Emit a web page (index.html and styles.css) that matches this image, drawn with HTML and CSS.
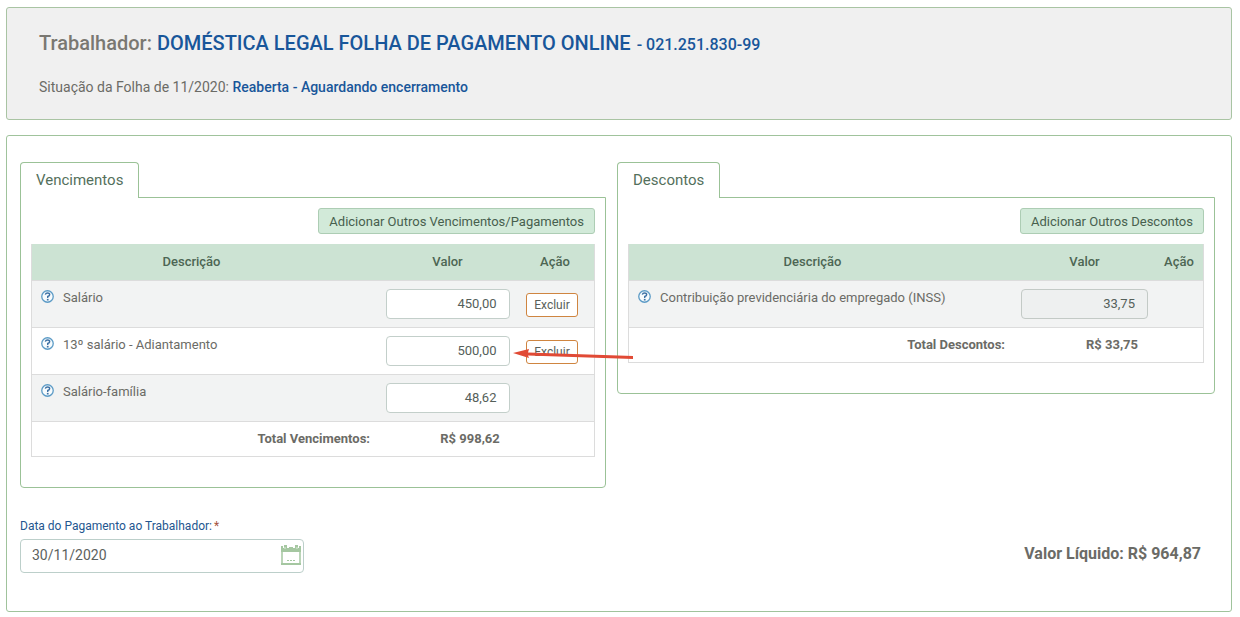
FILE: index.html
```
<!DOCTYPE html>
<html lang="pt-BR">
  <head>
    <meta charset="UTF-8" />
    <meta name="viewport" content="width=device-width, initial-scale=1.0" />
    <title>Folha de Pagamento</title>
    <link rel="stylesheet" href="styles.css">
  </head>
  <body>
    <svg class="symbols" aria-hidden="true">
      <symbol id="help" viewBox="0 0 12 12">
        <circle cx="6" cy="6" r="5.3" fill="#f7fbfd" stroke="#5c9bc6" stroke-width="1.2" />
        <path d="M4 4.2Q4.3 2.8 6 2.8Q8 2.8 8 4.3Q8 5.3 6.2 6V7.4" fill="none" stroke="#3f72a5" stroke-width="1.3" />
        <rect x="5.4" y="8.2" width="1.6" height="1.5" fill="#3f72a5" />
      </symbol>
    </svg>

    <header class="worker">
      <h1>Trabalhador: <strong>DOMÉSTICA LEGAL FOLHA DE PAGAMENTO ONLINE <small>- 021.251.830-99</small></strong></h1>
      <p>Situação da Folha de 11/2020: <strong>Reaberta - Aguardando encerramento</strong></p>
    </header>

    <main class="payroll">
      <div class="columns">
        <section class="group">
          <h2 class="tab">Vencimentos</h2>
          <div class="group-body">
            <button type="button" class="add-button">Adicionar Outros Vencimentos/Pagamentos</button>
            <table class="earnings">
              <thead>
                <tr>
                  <th class="col-desc">Descrição</th>
                  <th class="col-value">Valor</th>
                  <th class="col-action">Ação</th>
                </tr>
              </thead>
              <tbody>
                <tr>
                  <td><label class="desc" for="salario"><svg class="help"><use href="#help" /></svg>Salário</label></td>
                  <td><input type="text" class="value" id="salario" value="450,00" /></td>
                  <td><button type="button" class="delete-button">Excluir</button></td>
                </tr>
                <tr>
                  <td><label class="desc" for="decimo"><svg class="help"><use href="#help" /></svg>13º salário - Adiantamento</label></td>
                  <td>
                    <div class="pointed">
                      <input type="text" class="value" id="decimo" value="500,00" />
                      <svg class="arrow" viewBox="0 0 120 14" aria-hidden="true">
                        <path d="M0 6L16 2L15 5.5L120 9V12L15 8.5L16 11Z" fill="#e14a35" />
                      </svg>
                    </div>
                  </td>
                  <td><button type="button" class="delete-button">Excluir</button></td>
                </tr>
                <tr>
                  <td><label class="desc" for="familia"><svg class="help"><use href="#help" /></svg>Salário-família</label></td>
                  <td><input type="text" class="value" id="familia" value="48,62" /></td>
                  <td></td>
                </tr>
              </tbody>
              <tfoot>
                <tr>
                  <td class="total-label">Total Vencimentos:</td>
                  <td class="total">R$ 998,62</td>
                  <td></td>
                </tr>
              </tfoot>
            </table>
          </div>
        </section>

        <section class="group">
          <h2 class="tab">Descontos</h2>
          <div class="group-body">
            <button type="button" class="add-button">Adicionar Outros Descontos</button>
            <table class="discounts">
              <thead>
                <tr>
                  <th class="col-desc">Descrição</th>
                  <th class="col-value">Valor</th>
                  <th class="col-action">Ação</th>
                </tr>
              </thead>
              <tbody>
                <tr>
                  <td><label class="desc" for="inss"><svg class="help"><use href="#help" /></svg>Contribuição previdenciária do empregado (INSS)</label></td>
                  <td><input type="text" class="value" id="inss" value="33,75" readonly /></td>
                  <td></td>
                </tr>
              </tbody>
              <tfoot>
                <tr>
                  <td class="total-label">Total Descontos:</td>
                  <td class="total">R$ 33,75</td>
                  <td></td>
                </tr>
              </tfoot>
            </table>
          </div>
        </section>
      </div>

      <div class="bottom">
        <div class="payment-date">
          <label for="data">Data do Pagamento ao Trabalhador:<span class="required">*</span></label>
          <div class="date-box">
            <input type="text" id="data" value="30/11/2020" />
            <svg class="calendar" viewBox="0 0 20 20" aria-hidden="true">
              <path d="M1 4V19H19V4" fill="#fff" stroke="#a5c7a1" stroke-width="1.5" />
              <path d="M0 1H2V3H3V0H6V3H8V2H12V3H14V0H17V3H18V1H20V7H0ZM0 18H20V20H0Z" fill="#a5c7a1" />
              <path d="M4 2V4M16 2V4" stroke="#dcebd9" />
              <path d="M6 15.5H14" stroke="#a5c7a1" stroke-dasharray="2 1" />
            </svg>
          </div>
        </div>
        <p class="net">Valor Líquido: R$ 964,87</p>
      </div>
    </main>
  </body>
</html>
```
FILE: styles.css
```
* {
  box-sizing: border-box;
}

body {
  font-family: Roboto, Arial, sans-serif;
  font-size: 13px;
  margin: 7px 8px 5px 6px;
  color: #6b6b66;
  background-color: #fff;
}

input,
button {
  font-family: inherit;
  font-size: 13px;
}

.symbols {
  display: none;
}

.worker {
  background-color: #f0f0f0;
  border: 1px solid #a9c4a3;
  border-radius: 3px;
  padding: 23px 32px 22px;
  margin-bottom: 15px;
}

.worker h1 {
  margin: 0 0 21px;
  font-size: 20px;
  line-height: 24px;
  font-weight: 500;
  color: #7a7872;
}

.worker p {
  margin: 0;
  font-size: 14px;
  line-height: 19px;
}

.worker strong {
  font-weight: 500;
  color: #18569a;
}

.worker small {
  margin-left: 1px;
  font-size: 16px;
}

.payroll {
  border: 1px solid #a0c39c;
  border-radius: 3px;
  padding: 26px 16px 38px 13px;
}

.columns {
  display: grid;
  grid-template-columns: 586fr 598fr;
  gap: 11px;
  align-items: start;
}

.tab {
  position: relative;
  width: fit-content;
  margin: 0 0 -1px;
  padding: 0 15px;
  border: 1px solid #9bc297;
  border-bottom: none;
  border-radius: 4px 4px 0 0;
  background-color: #fff;
  color: #54705c;
  font-size: 15px;
  line-height: 35px;
  font-weight: 400;
}

.group-body {
  border: 1px solid #9bc297;
  border-radius: 0 0 4px 4px;
  padding: 10px 10px 30px;
}

.add-button {
  display: block;
  height: 26px;
  margin: 0 0 10px auto;
  padding: 0 10px;
  border: 1px solid #adcdb4;
  border-radius: 3px;
  background-color: #d2ead9;
  color: #47604e;
  cursor: pointer;
}

table {
  width: 100%;
  table-layout: fixed;
  border-collapse: separate;
  border-spacing: 0;
  border: 1px solid #dcdcdc;
  border-top: none;
}

th {
  height: 36px;
  padding: 0 0 2px;
  background-color: #cce3d3;
  color: #4d6653;
  font-weight: 500;
}

td {
  height: 47px;
  padding: 0;
  border-top: 1px solid #dcdcdc;
  text-align: center;
}

tbody tr:nth-child(odd) {
  background-color: #f2f3f3;
}

tfoot td {
  height: 35px;
}

.earnings .col-desc {
  padding-right: 28px;
}

.earnings .col-value {
  width: 137px;
}

.earnings .col-action {
  width: 78px;
}

.discounts .col-desc {
  padding-right: 18px;
}

.discounts .col-value {
  width: 141px;
}

.discounts .col-action {
  width: 48px;
}

.desc {
  display: flex;
  gap: 9px;
  height: 46px;
  padding: 9px 9px 0;
  text-align: left;
  line-height: 16px;
}

.help {
  width: 13px;
  height: 13px;
}

.value {
  display: block;
  width: calc(100% - 14px);
  height: 30px;
  margin: 0 auto;
  padding: 0 12px 2px;
  border: 1px solid #c3cfca;
  border-radius: 4px;
  background-color: #fff;
  color: #55605a;
  text-align: right;
}

.value:read-only {
  background-color: #eef0f0;
  border-color: #c3cac6;
}

.earnings .value {
  width: calc(100% - 13px);
}

.pointed {
  position: relative;
}

/* red marker over the advance payment */
.arrow {
  position: absolute;
  top: 11px;
  left: calc(100% - 3px);
  width: 120px;
  height: 14px;
  pointer-events: none;
}

.delete-button {
  height: 24px;
  margin: 2px 6px 0 0;
  padding: 0 7px;
  border: 1px solid #cf8540;
  border-radius: 3px;
  background-color: #fff;
  color: #5a5f5a;
  font-size: 12px;
  cursor: pointer;
}

.total-label,
.total {
  padding-bottom: 2px;
  font-weight: 700;
}

.total-label {
  padding-right: 9px;
  text-align: right;
}

.earnings .total {
  padding-left: 45px;
}

.discounts .total {
  padding-left: 55px;
}

.bottom {
  display: flex;
  justify-content: space-between;
  align-items: center;
  margin-top: 30px;
}

.payment-date label {
  display: block;
  margin-bottom: 5px;
  color: #24568f;
  font-size: 12px;
  line-height: 16px;
}

.required {
  margin-left: 2px;
  color: #a5553f;
}

.date-box {
  display: flex;
  align-items: center;
  width: 284px;
  height: 34px;
  padding: 0 2px 3px 11px;
  border: 1px solid #bccfca;
  border-radius: 4px;
}

.date-box input {
  flex: 1;
  min-width: 0;
  padding: 0;
  border: none;
  outline: none;
  background: none;
  color: #5c625e;
  font-size: 14px;
}

.calendar {
  width: 20px;
  height: 20px;
}

.net {
  margin: 16px 14px 0 0;
  font-size: 16px;
  line-height: 20px;
  font-weight: 700;
}
```
